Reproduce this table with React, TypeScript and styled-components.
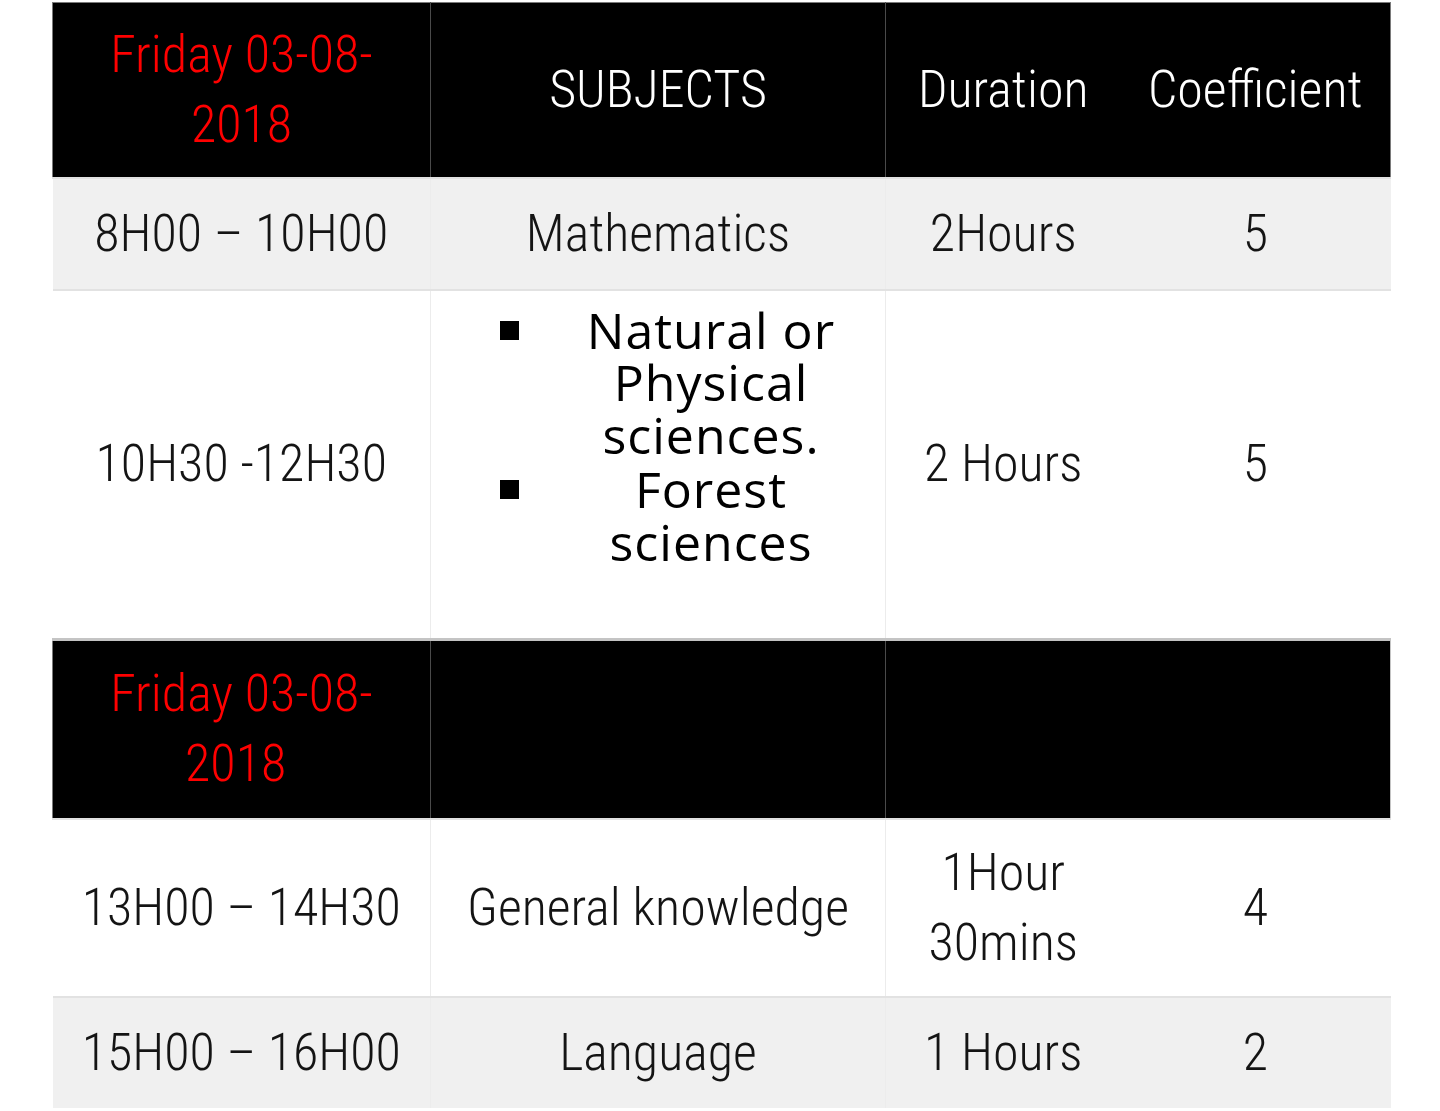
import React from "react";
import styled, { createGlobalStyle } from "styled-components";

const Global = createGlobalStyle`
  html, body { margin: 0; padding: 0; background: #ffffff; }
  body { font-family: "Roboto Condensed", Roboto, "Liberation Sans", sans-serif; }
`;

const Table = styled.table`
  border-collapse: collapse;
  table-layout: fixed;
  width: 1338px;
  margin: 2px 0 0 52px;
  font-family: "Roboto Condensed", Roboto, "Liberation Sans", sans-serif;
  font-stretch: condensed;
  font-weight: 300;
`;

const HeadRow = styled.tr<{ $h: number; $light?: boolean }>`
  height: ${(p) => p.$h}px;
  border-top: ${(p) => (p.$light ? "3px solid #c4c4c4" : "1px solid #7a7a7a")};
  border-left: 1px solid #7a7a7a;
  border-right: 1px solid ${(p) => (p.$light ? "#c4c4c4" : "#7a7a7a")};
`;

const HeadCell = styled.td<{ $red?: boolean; $divider?: boolean }>`
  background: #000000;
  color: ${(p) => (p.$red ? "#ff0000" : "#ffffff")};
  font-size: 52px;
  line-height: 70px;
  text-align: center;
  vertical-align: middle;
  padding: 0 8px;
  border-left: ${(p) => (p.$divider ? "1px solid #4a4a4a" : "none")};
`;

const BodyRow = styled.tr<{ $h: number; $shade?: boolean }>`
  height: ${(p) => p.$h}px;
  background: ${(p) => (p.$shade ? "#f0f0f0" : "#ffffff")};
  border-top: 2px solid #e2e2e2;
`;

const Cell = styled.td<{ $divider?: boolean; $top?: boolean }>`
  color: #141414;
  font-size: 52px;
  line-height: 70px;
  text-align: center;
  vertical-align: ${(p) => (p.$top ? "top" : "middle")};
  padding: ${(p) => (p.$top ? "11px 8px 0" : "0 8px")};
  border-left: ${(p) => (p.$divider ? "1px solid #ececec" : "none")};
`;

const SubjectList = styled.ul`
  margin: 0;
  padding: 0 0 0 106px;
  list-style: square outside;
  font-family: "Open Sans", "Noto Sans", sans-serif;
  font-stretch: normal;
  font-weight: 500;
  font-size: 50px;
  letter-spacing: 1px;
  line-height: 52.5px;
  color: #000000;
  text-align: center;
`;

const SubjectItem = styled.li`
  &::marker {
    font-size: 54px;
  }
`;

type Row = {
  time: string;
  subject: React.ReactNode;
  duration: React.ReactNode;
  coef: string;
  h: number;
  shade?: boolean;
  list?: boolean;
};

const DateHeader = ({
  h,
  light,
  labels,
  year,
}: {
  h: number;
  light?: boolean;
  labels: string[];
  year: string;
}) => (
  <HeadRow $h={h} $light={light}>
    <HeadCell $red>
      Friday 03-08-
      <br />
      {year}
    </HeadCell>
    <HeadCell $divider>{labels[0]}</HeadCell>
    <HeadCell $divider>{labels[1]}</HeadCell>
    <HeadCell>{labels[2]}</HeadCell>
  </HeadRow>
);

const BodyLine = ({ r }: { r: Row }) => (
  <BodyRow $h={r.h} $shade={r.shade}>
    <Cell>{r.time}</Cell>
    <Cell $divider $top={r.list}>
      {r.subject}
    </Cell>
    <Cell $divider>{r.duration}</Cell>
    <Cell>{r.coef}</Cell>
  </BodyRow>
);

const morning: Row[] = [
  { time: "8H00 – 10H00", subject: "Mathematics", duration: "2Hours", coef: "5", h: 112, shade: true },
  {
    time: "10H30 -12H30",
    subject: (
      <SubjectList>
        <SubjectItem>Natural or Physical sciences.</SubjectItem>
        <SubjectItem>Forest sciences</SubjectItem>
      </SubjectList>
    ),
    duration: "2 Hours",
    coef: "5",
    h: 350,
    list: true,
  },
];

const afternoon: Row[] = [
  {
    time: "13H00 – 14H30",
    subject: "General knowledge",
    duration: (
      <>
        1Hour
        <br />
        30mins
      </>
    ),
    coef: "4",
    h: 178,
  },
  { time: "15H00 – 16H00", subject: "Language", duration: "1 Hours", coef: "2", h: 111, shade: true },
];

export default function App() {
  return (
    <>
      <Global />
      <Table>
        <colgroup>
          <col style={{ width: 378 }} />
          <col style={{ width: 455 }} />
          <col style={{ width: 235 }} />
          <col style={{ width: 270 }} />
        </colgroup>
        <tbody>
          <DateHeader h={175} year="2018" labels={["SUBJECTS", "Duration", "Coefficient"]} />
          {morning.map((r) => (
            <BodyLine key={r.time} r={r} />
          ))}
          <DateHeader h={179} light year={"2018\u00a0"} labels={["", "", ""]} />
          {afternoon.map((r) => (
            <BodyLine key={r.time} r={r} />
          ))}
        </tbody>
      </Table>
    </>
  );
}
